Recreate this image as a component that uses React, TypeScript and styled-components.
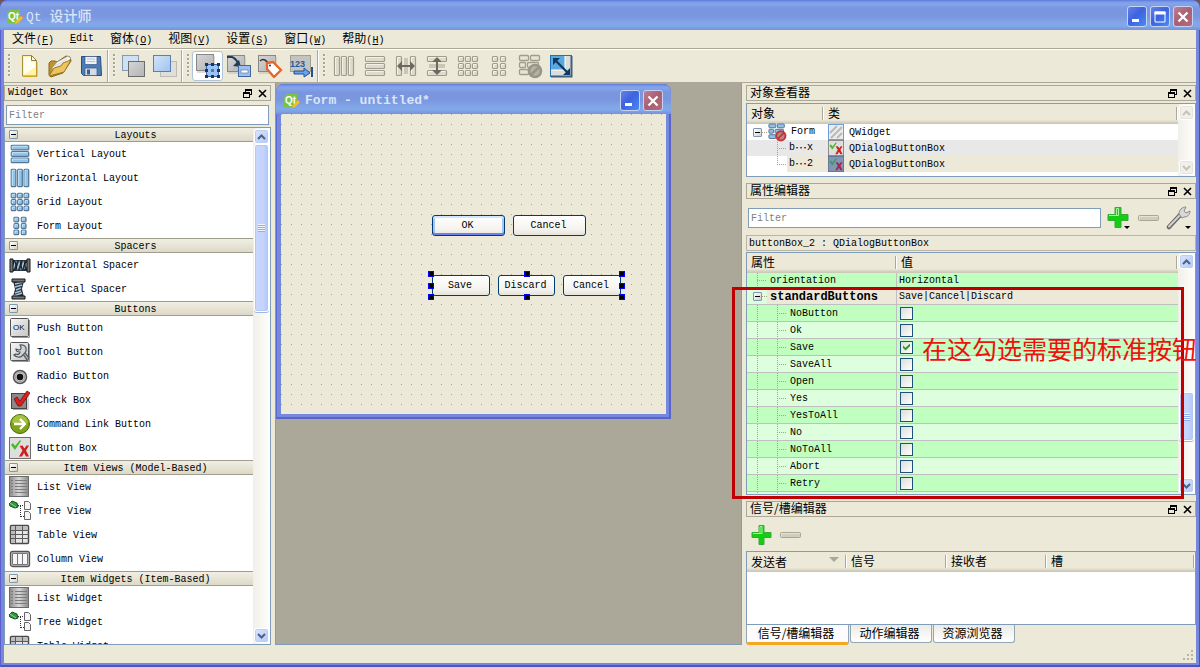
import React from "react";
import styled, { createGlobalStyle, css } from "styled-components";

const face = "#ece9d8";
const shade = "#aca899";
const field = "#7f9db9";

const GlobalStyle = createGlobalStyle`
  * { box-sizing: border-box; }
  body {
    margin: 0;
    background: #6f5560;
    color: #000;
    font: 10px/16px "Liberation Mono", "Noto Sans CJK SC", monospace;
  }
  button, input { font: inherit; color: inherit; padding: 0; border: 0; margin: 0; border-radius: 0; }
  button { background: none; }
  table { border-collapse: separate; border-spacing: 0; table-layout: fixed; width: 100%; }
  th, td { padding: 0; font-weight: normal; text-align: left; }
  svg { display: block; flex: none; }
`;

const Zh = styled.span`
  font-family: "Noto Sans CJK SC", sans-serif;
  font-size: 12px;
`;

/* ---------- window frames ---------- */

const Window = styled.div`
  height: 100vh;
  min-height: 560px;
  display: flex;
  flex-direction: column;
  padding: 0 4px 4px;
  overflow: hidden;
  border-radius: 8px 8px 0 0;
  background: #7488de;
  box-shadow: inset 1px 0 #5a5fcb, inset -1px 0 #4c4fb4, inset 0 -2px #5053bd;
`;

const TitleBar = styled.header<{ $inner?: boolean }>`
  flex: none;
  height: 30px;
  margin: 0 ${(p) => (p.$inner ? "-5px" : "-4px")};
  padding: ${(p) => (p.$inner ? "3px 8px 0 8px" : "3px 7px 0 7px")};
  display: flex;
  align-items: center;
  gap: 3px;
  border-radius: 8px 8px 0 0;
  background: linear-gradient(#5b79dd 0, #7d9ce8 2px, #86a4ea 4px, #7b96e0 8px, #7a96df 16px, #82a7e8 23px, #82a8e9 26px, #7690dd 30px);
`;

const TitleText = styled.h1<{ $bold?: boolean }>`
  flex: 1;
  margin: 0;
  padding-left: ${(p) => (p.$bold ? 2 : 0)}px;
  color: #d9e5f9;
  font-size: 13px;
  font-weight: ${(p) => (p.$bold ? "bold" : "normal")};
  line-height: 20px;
  white-space: pre;
  span { font-size: 14px; font-weight: 500; }
`;

const CaptionButton = styled.button<{ $close?: boolean }>`
  width: 20px;
  height: 21px;
  display: grid;
  place-items: center;
  border: 1px solid #c5d3f5;
  border-radius: 3px;
  background: ${(p) =>
    p.$close ? "linear-gradient(135deg, #bd7f96, #a95f70 50%, #b16c7e)" : "linear-gradient(135deg, #6583e4, #3d62e0 45%, #4a8af0)"};
`;

/* ---------- menu and tool bars ---------- */

const MenuBar = styled.nav`
  flex: none;
  height: 19px;
  display: flex;
  align-items: center;
  gap: 16px;
  padding-left: 8px;
  background: ${face};
  border-bottom: 1px solid ${shade};
`;

const MenuItem = styled.button`
  white-space: nowrap;
  line-height: 16px;
`;

const ToolBar = styled.div`
  flex: none;
  height: 34px;
  display: flex;
  background: ${face};
  border-top: 1px solid #fff;
  border-bottom: 1px solid ${shade};
`;

const ToolGroup = styled.div`
  display: flex;
  align-items: center;
  padding: 0 1px 0 4px;
  border-right: 1px solid ${shade};
  box-shadow: 1px 0 #fff;
  margin-right: 1px;
  &:last-child { border: 0; box-shadow: none; }
`;

const Grip = styled.i`
  width: 3px;
  height: 24px;
  margin-right: 2px;
  background: radial-gradient(circle at 1px 1px, #a8a494 1px, #fff 1px, transparent 2px) 0 0 / 3px 4px;
`;

const ToolButton = styled.button<{ $on?: boolean }>`
  width: 31px;
  height: 30px;
  display: grid;
  place-items: center;
  border: 1px solid transparent;
  border-radius: 3px;
  ${(p) => p.$on && css`background: #fff; border-color: #b0c4d8;`}
`;

/* ---------- main areas ---------- */

const Main = styled.main`
  flex: 1;
  min-height: 0;
  display: flex;
  background: ${face};
`;

const LeftDock = styled.aside`
  flex: none;
  width: 267px;
  display: flex;
  flex-direction: column;
  padding-top: 2px;
`;

const MdiArea = styled.section`
  flex: 1;
  min-width: 0;
  margin: 0 4px;
  border: 1px solid ${field};
  border-top: 0;
  background: ${shade};
  overflow: hidden;
`;

const RightDock = styled.aside`
  flex: none;
  width: 450px;
  display: flex;
  flex-direction: column;
  padding-top: 2px;
`;

const StatusBar = styled.footer`
  flex: none;
  height: 18px;
  display: flex;
  justify-content: flex-end;
  align-items: flex-end;
  padding: 0 1px 1px;
  background: ${face};
`;

const DockHeader = styled.div`
  flex: none;
  height: 16px;
  display: flex;
  align-items: center;
  gap: 6px;
  padding: 0 3px;
  border: 1px solid ${shade};
`;

const DockName = styled.h2`
  flex: 1;
  margin: 0;
  font-size: 10px;
  font-weight: normal;
  line-height: 14px;
`;

const DockButton = styled.button`
  width: 9px;
  height: 10px;
`;

const FilterInput = styled.input`
  flex: 1;
  min-width: 0;
  height: 20px;
  padding: 0 2px;
  border: 1px solid ${field};
  background: #fff;
  outline: 0;
  &::placeholder { color: #808080; opacity: 1; }
`;

const FilterRow = styled.div<{ $tall?: boolean }>`
  flex: none;
  display: flex;
  align-items: center;
  gap: 6px;
  padding: ${(p) => (p.$tall ? "7px 4px 5px 2px" : "4px 2px 2px")};
`;

const Pane = styled.div<{ $h?: number; $gap?: number }>`
  ${(p) => (p.$h ? `flex: none; height: ${p.$h}px;` : "flex: 1; min-height: 0;")}
  margin-top: ${(p) => p.$gap ?? 0}px;
  margin-bottom: ${(p) => (p.$gap ? 6 : 0)}px;
  display: flex;
  border: 1px solid ${field};
  background: #fff;
`;

const PaneBody = styled.div`
  flex: 1;
  min-width: 0;
  overflow: hidden;
`;

/* ---------- scroll bar ---------- */

const Bar = styled.div`
  flex: none;
  width: 17px;
  display: flex;
  flex-direction: column;
  padding: 1px;
  background: linear-gradient(90deg, #f1efe9, #fefefb);
`;

const BarButton = styled.button<{ $off?: boolean }>`
  flex: none;
  height: 15px;
  display: grid;
  place-items: center;
  border: 1px solid #fff;
  border-radius: 3px;
  color: ${(p) => (p.$off ? "#c5c3b8" : "#4d6185")};
  background: ${(p) => (p.$off ? "#f1f0ea" : "linear-gradient(135deg, #dbe6fd, #b5c9f8)")};
  box-shadow: ${(p) => (p.$off ? "inset 0 0 0 1px #e5e3da" : "inset 0 0 0 1px #bccdf3")};
`;

const BarSpace = styled.div<{ $grow: number }>`
  flex: ${(p) => p.$grow} 1 0;
`;

const BarThumb = styled.div<{ $grow: number }>`
  flex: ${(p) => p.$grow} 1 0;
  display: grid;
  place-items: center;
  border: 1px solid #fff;
  border-radius: 3px;
  background: linear-gradient(90deg, #c6d6fd, #c4d4fd 60%, #b2c7f8);
  box-shadow: inset 0 0 0 1px #b4c8f6, 0 1px #9db5e4;
  &::after {
    content: "";
    width: 7px;
    height: 8px;
    background: repeating-linear-gradient(#eef4fe 0 1px, #8cb0f8 1px 2px);
  }
`;

function ScrollBar({ parts, off }: { parts?: number[]; off?: boolean }) {
  return (
    <Bar>
      <BarButton $off={off} aria-label="Scroll up">
        <svg width="9" height="6" viewBox="0 0 9 6"><path d="M1 5l3.5-3.5L8 5" fill="none" stroke="currentColor" strokeWidth="2" /></svg>
      </BarButton>
      {parts ? (
        <>
          <BarSpace $grow={parts[0]} />
          <BarThumb $grow={parts[1]} />
          <BarSpace $grow={parts[2]} />
        </>
      ) : (
        <BarSpace $grow={1} />
      )}
      <BarButton $off={off} aria-label="Scroll down">
        <svg width="9" height="6" viewBox="0 0 9 6"><path d="M1 1l3.5 3.5L8 1" fill="none" stroke="currentColor" strokeWidth="2" /></svg>
      </BarButton>
    </Bar>
  );
}

/* ---------- widget box ---------- */

const Category = styled.button`
  width: 100%;
  height: 15px;
  display: flex;
  align-items: center;
  padding-left: 4px;
  border-top: 1px solid #a19d8d;
  border-bottom: 1px solid #a19d8d;
  background: linear-gradient(#f1efe3, #ddd9c8);
  line-height: 13px;
  &:first-child { border-top: 0; height: 14px; }
  b { flex: 1; padding-top: 1px; font-weight: normal; text-align: center; }
`;

const Toggle = styled.i`
  flex: none;
  width: 9px;
  height: 9px;
  border: 1px solid #7b98b5;
  border-radius: 1px;
  background: linear-gradient(#000, #000) 1px 3px / 5px 1px no-repeat, linear-gradient(135deg, #fff, #d5d0c2);
`;

const WidgetList = styled.ul`
  margin: 0;
  padding: 0;
  list-style: none;
`;

const WidgetItem = styled.li`
  height: 24px;
  display: flex;
  align-items: center;
  gap: 6px;
  padding-left: 4px;
  span { padding-top: 2px; }
`;

/* ---------- tables ---------- */

const HeadCell = styled.th<{ $w?: number }>`
  ${(p) => p.$w && `width: ${p.$w}px;`}
  height: 20px;
  padding-left: 4px;
  line-height: 16px;
  background:
    linear-gradient(${shade}, ${shade}) right 1px top 3px / 1px 13px no-repeat,
    linear-gradient(#fff, #fff) right 0 top 3px / 1px 13px no-repeat,
    linear-gradient(${face} 16px, #d8d4c4 18px, #c9c5b4 20px);
`;

const HeadFlex = styled.div`
  display: flex;
  justify-content: space-between;
  padding-right: 8px;
`;

const dotsDown = "repeating-linear-gradient(#a5a294 0 1px, transparent 1px 2px)";
const dotsRight = "repeating-linear-gradient(90deg, #a5a294 0 1px, transparent 1px 2px)";

const Guide = styled.i<{ $branch?: boolean; $end?: boolean }>`
  flex: none;
  align-self: stretch;
  width: 20px;
  background:
    ${(p) => (p.$branch ? `${dotsRight} 10px 50% / 9px 1px no-repeat,` : "")}
    ${dotsDown} 10px 0 / 1px ${(p) => (p.$end ? "50%" : "100%")} no-repeat;
`;

const Indent = styled.i`
  flex: none;
  width: 20px;
`;

const ToggleGuide = styled.span<{ $bg?: string }>`
  flex: none;
  align-self: stretch;
  width: 20px;
  display: flex;
  align-items: center;
  padding-left: 6px;
  background: ${dotsRight} 15px 50% / 5px 1px no-repeat${(p) => (p.$bg ? `, ${p.$bg}` : "")};
`;

const TreeRow = styled.tr<{ $bg?: string }>`
  height: 16px;
  td { background: ${(p) => p.$bg ?? "#fff"}; }
`;

const Cell = styled.div<{ $gap?: number; $pad?: number }>`
  height: 16px;
  display: flex;
  align-items: center;
  gap: ${(p) => p.$gap ?? 0}px;
  padding-left: ${(p) => p.$pad ?? 0}px;
  white-space: nowrap;
`;

const Blank = styled.i`
  align-self: stretch;
  width: 40px;
  display: flex;
  background: #fff;
`;

const PropRow = styled.tr<{ $bg: string; $tall?: boolean }>`
  td {
    height: ${(p) => (p.$tall ? 17 : 16)}px;
    background: ${(p) => p.$bg};
    border-bottom: 1px solid #bfbfbf;
  }
  td:first-child { border-right: 1px solid #bfbfbf; }
  td > div { height: ${(p) => (p.$tall ? 16 : 15)}px; }
`;

const PropName = styled.label<{ $bold?: boolean }>`
  padding: 1px 0 0 3px;
  ${(p) => p.$bold && "font-weight: bold; font-size: 12px;"}
`;

const PropValue = styled.span`
  padding-top: 1px;
`;

const Check = styled.input`
  appearance: none;
  width: 13px;
  height: 13px;
  display: grid;
  place-items: center;
  border: 1px solid #1c5180;
  background: linear-gradient(135deg, #dcdcd7, #fff);
  &:checked::after {
    content: "";
    width: 7px;
    height: 7px;
    background: #21a121;
    clip-path: polygon(0 28%, 36% 62%, 100% 0, 100% 40%, 36% 100%, 0 66%);
  }
`;

const ObjectLabel = styled.div`
  flex: none;
  height: 16px;
  margin-bottom: 1px;
  padding-left: 2px;
  border: 1px solid #b9b5a5;
  line-height: 15px;
`;

const PropArea = styled.div`
  position: relative;
  flex: 1;
  min-height: 0;
  display: flex;
  margin-bottom: 6px;
`;

const Highlight = styled.div`
  position: absolute;
  z-index: 2;
  left: -14px;
  right: 12px;
  top: 35px;
  bottom: -4px;
  border: 3px solid #c00000;
  pointer-events: none;
`;

const Note = styled.p`
  position: absolute;
  z-index: 3;
  left: 176px;
  top: 80px;
  margin: 0;
  color: #f01010;
  font: 25px/32px "Noto Sans CJK SC", sans-serif;
  white-space: nowrap;
`;

const IconButton = styled.button`
  display: block;
`;

const SlotTools = styled.div`
  flex: none;
  height: 34px;
  display: flex;
  align-items: center;
  gap: 8px;
  padding: 2px 0 0 5px;
`;

const Tabs = styled.div`
  flex: none;
  height: 20px;
  display: flex;
  align-items: flex-start;
  gap: 1px;
`;

const Tab = styled.button<{ $on?: boolean }>`
  width: ${(p) => (p.$on ? 103 : 82)}px;
  height: ${(p) => (p.$on ? 20 : 18)}px;
  padding-right: 3px;
  border: 1px solid #91a7b4;
  border-top: 0;
  border-radius: 0 0 3px 3px;
  background: linear-gradient(#ecebe6, #fff);
  line-height: 16px;
  ${(p) => p.$on && css`
    background: #fcfcfe;
    border-bottom: 3px solid #f5a623;
  `}
`;

/* ---------- form being designed ---------- */

const FormWindow = styled.div`
  width: 395px;
  margin-top: 1px;
  max-width: 100%;
  padding: 0 5px 5px;
  border-radius: 8px 8px 0 0;
  background: #7488de;
  box-shadow: inset 1px 0 #5a6bd2, inset -2px 0 #5a62cb, inset 0 -2px #5a62cb;
`;

const Canvas = styled.div`
  position: relative;
  height: 300px;
  background: conic-gradient(from 0deg at 1px 1px, ${face} 75%, #a8a596 0) 0 0 / 10px 10px;
`;

const ButtonBox = styled.div<{ $y: number }>`
  position: absolute;
  left: 151px;
  top: ${(p) => p.$y}px;
  display: flex;
  gap: 8px;
`;

const PushButton = styled.button<{ $w: number; $default?: boolean }>`
  width: ${(p) => p.$w}px;
  height: 21px;
  padding: 1px 2px 0 0;
  border: 1px solid #003c74;
  border-radius: 3px;
  background: linear-gradient(#fff, #f4f3ee 70%, #e6e3da);
  ${(p) => p.$default && css`box-shadow: inset 0 2px #cee7ff, inset 0 -2px #6982ee, inset 2px 0 #a9c3f2, inset -2px 0 #a9c3f2;`}
`;

const Handle = styled.i<{ $x: string; $y: string }>`
  position: absolute;
  width: 6px;
  height: 6px;
  left: ${(p) => p.$x};
  top: ${(p) => p.$y};
  border: 1px solid #00f;
  background: #000;
`;

/* ---------- drawings ---------- */

const QtLogo = () => (
  <svg width="16" height="16" viewBox="0 0 16 16">
    <path d="M3 1h10v10l-3 3H0V4z" fill="#7cc242" />
    <text x="1" y="11" fontFamily="Liberation Sans" fontWeight="bold" fontSize="10" fill="#fff">Qt</text>
    <path d="M8 15l1-3 5-5 2 2-5 5z" fill="#f4c020" />
    <path d="M14 7l1-1 1.500 1.500L16 9z" fill="#e08080" />
  </svg>
);

const Minimize = () => (
  <svg width="14" height="14"><rect x="2" y="9" width="7" height="3" fill="#fff" /></svg>
);
const Maximize = () => (
  <svg width="14" height="14"><path d="M2 2h10v10H2z" fill="none" stroke="#fff" /><path d="M1.500 1.500h11v3h-11z" fill="#fff" /></svg>
);
const Close = () => (
  <svg width="14" height="14"><path d="M2.500 2.500l9 9M11.500 2.500l-9 9" stroke="#fff" strokeWidth="2.300" /></svg>
);
const Float = () => (
  <svg width="9" height="9" shapeRendering="crispEdges">
    <path d="M2 0h7v2H2zM8 0h1v6H8zM6 5h3v1H6zM2 0h1v3H2z" />
    <path d="M0 3h7v2H0zM0 3h1v6H0zM6 3h1v6H6zM0 8h7v1H0z" />
  </svg>
);
const Cross = () => (
  <svg width="9" height="9"><path d="M1 1l7 7M8 1L1 8" stroke="#000" strokeWidth="1.600" /></svg>
);

const NewFile = () => (
  <svg width="24" height="24" viewBox="0 0 24 24">
    <path d="M5.500 1.500h9l5 5V22h-14z" fill="#fff3a4" stroke="#a98e3c" />
    <path d="M7 3h7v5h4v5L9 20H7z" fill="#fffef2" />
    <path d="M14.500 1.500v5h5z" fill="#fffbe0" stroke="#8f7c3c" />
    <path d="M6 22.500h14V8" fill="none" stroke="#cfa52a" />
  </svg>
);
const OpenFile = () => (
  <svg width="26" height="24" viewBox="0 0 26 24">
    <path d="M2 21V9l2-2h4l2 1 9-6 4 1 1 4-8 12-12 4z" fill="#c3922a" stroke="#8a6718" />
    <path d="M5 14l5-6 11-6 3 2-6 8-12 5z" fill="#f6f6f2" stroke="#8e8e88" strokeWidth=".7" />
    <path d="M8 12l12-7M8 14l12-7" stroke="#c9c9c4" strokeWidth=".7" />
    <path d="M2 22l5-8 7-2 2-3 8-3-7 12z" fill="#ecc460" stroke="#a07a1c" />
  </svg>
);
const Save = () => (
  <svg width="24" height="24" viewBox="0 0 24 24">
    <path d="M2.500 2.500h19l1 19h-18l-2-2z" fill="#4b7db8" stroke="#2b4c78" />
    <path d="M6 2.500h12v8H6z" fill="#eef2f7" stroke="#35588a" strokeWidth=".7" />
    <path d="M8 5h8M8 7.500h8" stroke="#b3c2d4" />
    <path d="M6 14h12v7.500H6z" fill="#d4dbe4" stroke="#35588a" strokeWidth=".7" />
    <path d="M8 15.500h3v5H8z" fill="#385f90" />
  </svg>
);
const Layers = ({ raise }: { raise?: boolean }) => (
  <svg width="26" height="24" viewBox="0 0 26 24">
    <defs>
      <linearGradient id="lb" x2="1" y2="1"><stop stopColor="#d3e5fb" /><stop offset="1" stopColor="#9fc2ef" /></linearGradient>
      <linearGradient id="lg" x2="1" y2="1"><stop stopColor="#d6d6d6" /><stop offset="1" stopColor="#b3b3b3" /></linearGradient>
    </defs>
    {raise ? (
      <>
        <rect x="8.500" y="7.500" width="16" height="15" fill="#dededa" stroke="#bcbcb4" />
        <rect x="1.500" y="1.500" width="17" height="16" fill="url(#lb)" stroke="#5a7fb0" />
      </>
    ) : (
      <>
        <rect x="1.500" y="1.500" width="16" height="15" fill="#cfe0f2" stroke="#8299b5" />
        <rect x="7.500" y="7.500" width="16" height="15" fill="url(#lg)" stroke="#6c6c6c" />
      </>
    )}
  </svg>
);
const GreyBack = () => (
  <>
    <rect x="1.500" y="1.500" width="17" height="16" fill="url(#lg)" stroke="#878787" />
    <path d="M2 19h17V3" fill="none" stroke="#bdbaa9" />
  </>
);
const EditWidgets = () => (
  <svg width="26" height="26" viewBox="0 0 26 26">
    <GreyBack />
    <rect x="11.500" y="11.500" width="12" height="12" fill="#9cc3f8" stroke="#3c64a0" />
    {[10, 16, 22].map((x) => [10, 16, 22].map((y) => (x === 16 && y === 16 ? null : <rect key={`${x}${y}`} x={x} y={y} width="3" height="3" fill="#1f3454" />)))}
    <rect x="16" y="16" width="3" height="3" fill="#5478b0" />
  </svg>
);
const EditSignals = () => (
  <svg width="26" height="24" viewBox="0 0 26 24">
    <GreyBack />
    <path d="M1 3h5c3 1 5 4 6 6" fill="none" stroke="#263c55" strokeWidth="2" />
    <path d="M15 13l-8-1 6-6z" fill="#263c55" />
    <rect x="12.500" y="11.500" width="12" height="11" fill="#9ebfee" stroke="#4068a0" />
    <rect x="15" y="16" width="7" height="3" fill="#fff" stroke="#4a70b0" strokeWidth=".6" />
  </svg>
);
const EditBuddies = () => (
  <svg width="26" height="24" viewBox="0 0 26 24">
    <GreyBack />
    <path d="M3 7c3-3 7-1 9 4" fill="none" stroke="#333" strokeWidth="1.500" />
    <path d="M10 9l6-1 8 8-7 7-7-8z" fill="#fff" stroke="#e5662a" strokeWidth="2.300" />
    <circle cx="13" cy="11.500" r="1" fill="#333" />
  </svg>
);
const TabOrder = () => (
  <svg width="26" height="24" viewBox="0 0 26 24">
    <rect x="2.500" y="1.500" width="20" height="16" fill="#c3c3bf" stroke="#a1a19b" />
    <text x="2" y="13" fontFamily="Liberation Sans" fontSize="9" fontWeight="bold" fill="#28589e">123</text>
    <path d="M6 17h10v-3l6 5-6 4v-3H6z" fill="#66a3ee" stroke="#24518e" />
    <path d="M24 13v10" stroke="#24518e" strokeWidth="2" />
  </svg>
);

type Bars = { boxes: number[][]; blue?: boolean; children?: React.ReactNode };
const BarsIcon = ({ boxes, blue, children }: Bars) => (
  <svg width={22} height={22} viewBox={blue ? "-1 -1 24 24" : "0 0 22 22"}>
    {boxes.map(([x, y, w, h]) => (
      <g key={`${x}-${y}`}>
        <rect x={x + 0.5} y={y + 0.5} width={w - 1} height={h - 1} rx="1" fill={blue ? "#8fc4ea" : "#dedbcc"} stroke={blue ? "#567797" : "#a09d8c"} strokeWidth={blue ? 1.4 : 1.2} />
        <path d={`M${x + 1.5} ${y + h - 1.5}V${y + 1.5}H${x + w - 1.5}`} fill="none" stroke={blue ? "#cdeafa" : "#f4f2e8"} />
      </g>
    ))}
    {children}
  </svg>
);
const columns = [[1, 1, 6, 20], [8, 1, 6, 20], [15, 1, 6, 20]];
const lines = [[1, 1, 20, 6], [1, 8, 20, 6], [1, 15, 20, 6]];
const grid = [1, 8, 15].flatMap((y) => [1, 8, 15].map((x) => [x, y, 6, 6]));
const formGrid = [1, 8, 15].flatMap((y) => [4, 12].map((x) => [x, y, 6, 6]));
const SplitH = () => (
  <BarsIcon boxes={[[1, 1, 6, 20], [15, 1, 6, 20]]}>
    <path d="M10 3v16M12 3v16" stroke="#a7a493" />
    <path d="M2 11l5-5v4h8V6l5 5-5 5v-4H7v4z" fill="#6c6a60" />
  </BarsIcon>
);
const SplitV = () => (
  <BarsIcon boxes={[[1, 1, 20, 6], [1, 15, 20, 6]]}>
    <path d="M3 10h16M3 12h16" stroke="#a7a493" />
    <path d="M11 2l5 5h-4v8h4l-5 5-5-5h4V7H6z" fill="#6c6a60" />
  </BarsIcon>
);
const BreakLayout = ({ color, size = 26 }: { color?: boolean; size?: number }) => (
  <svg width={size} height={size} viewBox="0 0 26 26">
    {[[2, 2, 10, 6], [13, 2, 10, 6], [2, 9, 7, 6], [10, 9, 12, 6], [2, 16, 10, 6]].map(([x, y, w, h]) => (
      <rect key={`${x}-${y}`} x={x + 0.5} y={y + 0.5} width={w - 1} height={h - 1} rx="1" fill={color ? "#93bfe3" : "#e8e5d8"} stroke={color ? "#55789c" : "#a09d8c"} strokeWidth="1.300" />
    ))}
    <circle cx="18" cy="18" r="6" fill={color ? "#b58a8a" : "#b5b2a4"} stroke={color ? "#c03838" : "#98968a"} strokeWidth="2.600" />
    <path d="M14 22l8-8" stroke={color ? "#c03838" : "#98968a"} strokeWidth="2.500" />
  </svg>
);
const AdjustSize = () => (
  <svg width="24" height="24" viewBox="0 0 24 24">
    <rect x="1.500" y="1.500" width="21" height="21" fill="#dcdcd8" stroke="#2370b8" />
    <path d="M2 2h14v14H2z" fill="#5ca8dc" />
    <path d="M2 16h14M16 2v14" stroke="#fff" />
    <path d="M22.500 2v20.500H2" fill="none" stroke="#3e5f80" strokeWidth="2" />
    <path d="M7 7l11 11" stroke="#0d3b66" strokeWidth="2.300" />
    <path d="M4 4h7l-7 7zM21 21h-7l7-7z" fill="#0d3b66" />
  </svg>
);

const HSpacer = () => (
  <svg width="22" height="22" viewBox="0 0 22 22">
    <path d="M3 6h16v11H3z" fill="#25323c" />
    <path d="M4 15l3-8M8 16l3-9M12 16l3-9M16 15l2-6" stroke="#a6c4d8" strokeWidth="1.700" />
    <path d="M6 7l2 9M11 7l2 9M15 7l2 9" stroke="#10181e" />
    <path d="M1 5h3v13H1zM18 5h3v13h-3z" fill="#777" stroke="#151515" />
  </svg>
);
const VSpacer = () => (
  <svg width="22" height="22" viewBox="0 0 22 22">
    <path d="M4 3h11l-2 8 2 8H4l2-8z" fill="#25323c" />
    <path d="M6 6l8-2M6 9l7-2M7 12l5-2M6 15l6-2M5 18l8-3" stroke="#a6c4d8" strokeWidth="1.500" />
    <path d="M3 1h13v3H3zM3 18h13v3H3z" fill="#777" stroke="#151515" />
  </svg>
);
const GreyButton = ({ children }: { children?: React.ReactNode }) => (
  <svg width="22" height="22" viewBox="0 0 22 22">
    <defs><linearGradient id="gb" x2="1" y2="1"><stop stopColor="#f7f7f7" /><stop offset="1" stopColor="#c4c4c4" /></linearGradient></defs>
    <path d="M3 20.500h17.500V3" fill="none" stroke="#9a9a9a" />
    <rect x="1.500" y="1.500" width="18" height="18" rx="1" fill="url(#gb)" stroke="#555" />
    {children}
  </svg>
);
const PushIcon = () => (
  <GreyButton><text x="4" y="13" fontFamily="Liberation Sans" fontSize="8" fill="#111">OK</text></GreyButton>
);
const ToolIcon = () => (
  <GreyButton>
    <path d="M11 4c4-1 7 2 6 6-1 3-3 3-4 5-2 2-6 1-8-1l2-1c2 1 4 0 4-2-3 0-4-1-4-3l3 1c2 0 3-2 1-5z" fill="#cfd3d8" stroke="#4c535c" strokeWidth="1.200" />
    <path d="M14 13l5 7M16 12l4 5" stroke="#5c636c" strokeWidth="1.500" />
  </GreyButton>
);
const RadioIcon = () => (
  <svg width="22" height="22" viewBox="0 0 22 22">
    <circle cx="11" cy="12" r="6.500" fill="#d2d2d2" stroke="#555" strokeWidth="1.500" />
    <circle cx="11" cy="12" r="4.700" fill="none" stroke="#9a9a9a" />
    <circle cx="11" cy="12" r="3.300" fill="#111" />
  </svg>
);
const CheckIcon = () => (
  <svg width="22" height="22" viewBox="0 0 22 22">
    <rect x="2.500" y="4.500" width="15" height="15" fill="#8a8a8a" stroke="#444" />
    <path d="M4 20.500h15V7" fill="none" stroke="#aaa" />
    <path d="M5 10l3-2 3 4 7-10 3 2-9 13H9z" fill="#da1f1f" stroke="#7e0c0c" strokeWidth=".8" />
  </svg>
);
const CommandIcon = () => (
  <svg width="22" height="22" viewBox="0 0 22 22">
    <circle cx="11" cy="11" r="9.500" fill="#7fa31a" stroke="#4c650c" />
    <path d="M3 10a8 8 0 0 1 16 0z" fill="#a5c23c" />
    <path d="M5 11h10M11 6l5 5-5 5" fill="none" stroke="#fff" strokeWidth="2.300" />
  </svg>
);
const BoxIcon = ({ size = 22, picked }: { size?: number; picked?: boolean }) => (
  <svg width={size} height={size} viewBox="0 0 22 22">
    <rect x=".5" y=".5" width="21" height="21" fill={picked ? "#8095b8" : "#dedede"} stroke={picked ? "#4d6488" : "#6e6e6e"} />
    <path d="M2 8l2-2 2 3 5-6 1 1-6 9z" fill={picked ? "#3d9a5a" : "#4ab82a"} />
    <path d="M10.500 9l3-.5 2 3 2-3h2.500l-3 5 3 6h-3l-2-3.500-2 3.500h-3l3.500-6z" fill={picked ? "#a0284c" : "#cf1f1f"} />
  </svg>
);
const ListIcon = () => (
  <svg width="22" height="22" viewBox="0 0 22 22">
    <defs><linearGradient id="ls" x2="1" y2="0"><stop stopColor="#8a8a8a" /><stop offset=".5" stopColor="#d8d8d8" /><stop offset="1" stopColor="#8a8a8a" /></linearGradient></defs>
    <rect x=".5" y=".5" width="19" height="20" fill="url(#ls)" stroke="#6a6a6a" />
    <path d="M2 4.500h2M2 7.500h2M2 10.500h2M2 13.500h2M2 16.500h2M6 4.500h12M6 7.500h12M6 10.500h12M6 13.500h12M6 16.500h12" stroke="#7c7c7c" />
  </svg>
);
const TreeIcon = () => (
  <svg width="22" height="22" viewBox="0 0 22 22">
    <path d="M0 4l3-3 5 2 1 4-3 1-5-2z" fill="#2f9a3c" stroke="#155020" />
    <path d="M1 3l6 4" stroke="#8fd897" />
    <path d="M9 5.500h5M11.500 6v11M12 16.500h3" fill="none" stroke="#333" strokeDasharray="1 1" />
    <path d="M15.500 1.500h4l2 2v6h-6zM15.500 11.500h4l2 2v6h-6z" fill="#f4f4f4" stroke="#666" />
  </svg>
);
const TableIcon = () => (
  <svg width="22" height="22" viewBox="0 0 22 22">
    <rect x="1.500" y="1.500" width="18" height="18" rx="1" fill="#e6e6e6" stroke="#4a4a4a" strokeWidth="1.500" />
    <path d="M2 3h17v3H2zM2 3h4v16H2z" fill="#bdbdbd" />
    <path d="M2 6.500h18M2 10.500h18M2 14.500h18M6.500 2v17M13.500 2v17" stroke="#5b5b5b" />
  </svg>
);
const ColumnIcon = () => (
  <svg width="22" height="22" viewBox="0 0 22 22">
    <rect x="1.500" y="3.500" width="19" height="15" rx="2" fill="#c4c4c4" stroke="#555" strokeWidth="1.300" />
    <path d="M3.500 5.500h15v11h-15z" fill="#f6f6f6" stroke="#777" />
    <path d="M8.500 6v10M13.500 6v10" stroke="#777" />
  </svg>
);
const WidgetIcon = () => (
  <svg width="16" height="16" viewBox="0 0 16 16">
    <rect x=".5" y=".5" width="15" height="15" fill="#ececec" stroke="#6f9fd8" />
    <path d="M2 9l7-7M3 14L14 3M9 14l5-5" stroke="#b9b9b9" strokeWidth="2" />
  </svg>
);
const PlusIcon = ({ menu }: { menu?: boolean }) => (
  <svg width={menu ? 25 : 21} height="24" viewBox={menu ? "2 0 25 24" : "0 0 21 24"}>
    <path d={menu ? "M10 1.500h6v7h7v6h-7v7h-6v-7H3v-6h7z" : "M8 2.500h5v7h7v5h-7v7H8v-7H1v-5h7z"} fill="#12cf12" stroke="#38a838" />
    <path d={menu ? "M11.500 9.500v-7h2v7H4" : "M9 10.500V3.500h2v7H2"} fill="none" stroke="#a8f5a0" />
    {menu && <path d="M19 20h6l-3 3z" />}
  </svg>
);
const MinusIcon = () => (
  <svg width="22" height="8" viewBox="0 0 22 8"><rect x=".5" y="1.500" width="20" height="5" rx="1" fill="#d0cdbf" stroke="#a9a698" /><path d="M1.500 5.500v-3h18" fill="none" stroke="#e5e3d9" /></svg>
);
const WrenchIcon = () => (
  <svg width="26" height="24" viewBox="0 0 26 24">
    <path d="M3 21L15 8" stroke="#666" strokeWidth="4.500" strokeLinecap="round" />
    <path d="M3 20.500L15 8" stroke="#d2d2d2" strokeWidth="2" strokeLinecap="round" />
    <path d="M13 8c0-4 3-7 7-7l-2 4 2 2 4-2c0 4-3 6-6 6l-2 1z" fill="#d8d8d8" stroke="#8a8a8a" />
    <path d="M19 20h6l-3 3z" />
  </svg>
);
const SizeGrip = () => (
  <svg width="12" height="12">
    {[[8, 0], [4, 4], [8, 4], [0, 8], [4, 8], [8, 8]].map(([x, y]) => (
      <rect key={`${x}-${y}`} x={x} y={y} width="2" height="2" fill="#b8b4a3" />
    ))}
  </svg>
);

/* ---------- data ---------- */

const menus: [string, string][] = [["文件", "F"], ["", ""], ["窗体", "O"], ["视图", "V"], ["设置", "S"], ["窗口", "W"], ["帮助", "H"]];

const categories: { name: string; items: [string, React.ReactNode][] }[] = [
  { name: "Layouts", items: [
    ["Vertical Layout", <BarsIcon boxes={lines} blue />],
    ["Horizontal Layout", <BarsIcon boxes={columns} blue />],
    ["Grid Layout", <BarsIcon boxes={grid} blue />],
    ["Form Layout", <BarsIcon boxes={formGrid} blue />],
  ] },
  { name: "Spacers", items: [["Horizontal Spacer", <HSpacer />], ["Vertical Spacer", <VSpacer />]] },
  { name: "Buttons", items: [
    ["Push Button", <PushIcon />],
    ["Tool Button", <ToolIcon />],
    ["Radio Button", <RadioIcon />],
    ["Check Box", <CheckIcon />],
    ["Command Link Button", <CommandIcon />],
    ["Button Box", <BoxIcon />],
  ] },
  { name: "Item Views (Model-Based)", items: [
    ["List View", <ListIcon />],
    ["Tree View", <TreeIcon />],
    ["Table View", <TableIcon />],
    ["Column View", <ColumnIcon />],
  ] },
  { name: "Item Widgets (Item-Based)", items: [
    ["List Widget", <ListIcon />],
    ["Tree Widget", <TreeIcon />],
    ["Table Widget", <TableIcon />],
  ] },
];

const toolGroups: [string, React.ReactNode][][] = [
  [["New", <NewFile />], ["Open", <OpenFile />], ["Save", <Save />]],
  [["Send to back", <Layers />], ["Bring to front", <Layers raise />]],
  [["Edit widgets", <EditWidgets />], ["Edit signals", <EditSignals />], ["Edit buddies", <EditBuddies />], ["Edit tab order", <TabOrder />]],
  [
    ["Lay out horizontally", <BarsIcon boxes={columns} />],
    ["Lay out vertically", <BarsIcon boxes={lines} />],
    ["Horizontal splitter", <SplitH />],
    ["Vertical splitter", <SplitV />],
    ["Grid", <BarsIcon boxes={grid} />],
    ["Form layout", <BarsIcon boxes={formGrid} />],
    ["Break layout", <BreakLayout />],
    ["Adjust size", <AdjustSize />],
  ],
];

const flags = ["NoButton", "Ok", "Save", "SaveAll", "Open", "Yes", "YesToAll", "No", "NoToAll", "Abort", "Retry"];
const green = "#c0ffc0";
const pale = "#ddffdd";

function DockTitle({ children }: { children: React.ReactNode }) {
  return (
    <DockHeader>
      <DockName>{children}</DockName>
      <DockButton aria-label="Float"><Float /></DockButton>
      <DockButton aria-label="Close"><Cross /></DockButton>
    </DockHeader>
  );
}

export default function App() {
  return (
    <Window>
      <GlobalStyle />
      <TitleBar>
        <QtLogo />
        <TitleText>Qt <Zh>设计师</Zh></TitleText>
        <CaptionButton aria-label="Minimize"><Minimize /></CaptionButton>
        <CaptionButton aria-label="Maximize"><Maximize /></CaptionButton>
        <CaptionButton $close aria-label="Close"><Close /></CaptionButton>
      </TitleBar>

      <MenuBar>
        {menus.map(([name, key]) =>
          name ? (
            <MenuItem key={name}><Zh>{name}</Zh>(<u>{key}</u>)</MenuItem>
          ) : (
            <MenuItem key="edit"><u>E</u>dit</MenuItem>
          )
        )}
      </MenuBar>

      <ToolBar>
        {toolGroups.map((group, i) => (
          <ToolGroup key={i}>
            <Grip />
            {group.map(([label, icon]) => (
              <ToolButton key={label} aria-label={label} $on={label === "Edit widgets"}>{icon}</ToolButton>
            ))}
          </ToolGroup>
        ))}
      </ToolBar>

      <Main>
        <LeftDock>
          <DockTitle>Widget Box</DockTitle>
          <FilterRow><FilterInput placeholder="Filter" aria-label="Filter widgets" /></FilterRow>
          <Pane>
            <PaneBody>
              {categories.map((c) => (
                <React.Fragment key={c.name}>
                  <Category><Toggle /><b>{c.name}</b></Category>
                  <WidgetList>
                    {c.items.map(([label, icon]) => (
                      <WidgetItem key={label}>{icon}<span>{label}</span></WidgetItem>
                    ))}
                  </WidgetList>
                </React.Fragment>
              ))}
            </PaneBody>
            <ScrollBar parts={[0, 166, 317]} />
          </Pane>
        </LeftDock>

        <MdiArea>
          <FormWindow>
            <TitleBar $inner>
              <QtLogo />
              <TitleText $bold>Form - untitled*</TitleText>
              <CaptionButton aria-label="Minimize form"><Minimize /></CaptionButton>
              <CaptionButton $close aria-label="Close form"><Close /></CaptionButton>
            </TitleBar>
            <Canvas>
              <ButtonBox $y={101}>
                <PushButton $w={73} $default>OK</PushButton>
                <PushButton $w={73}>Cancel</PushButton>
              </ButtonBox>
              <ButtonBox $y={161}>
                <PushButton $w={58}>Save</PushButton>
                <PushButton $w={57}>Discard</PushButton>
                <PushButton $w={58}>Cancel</PushButton>
                {["-4px", "calc(50% - 3px)", "calc(100% - 2px)"].map((x, i) =>
                  ["-4px", "calc(50% - 3px)", "calc(100% - 2px)"].map((y, j) =>
                    i === 1 && j === 1 ? null : <Handle key={`${i}${j}`} $x={x} $y={y} />
                  )
                )}
              </ButtonBox>
            </Canvas>
          </FormWindow>
        </MdiArea>

        <RightDock>
          <DockTitle><Zh>对象查看器</Zh></DockTitle>
          <Pane $h={74} $gap={2}>
            <PaneBody>
              <table>
                <thead>
                  <tr><HeadCell $w={77}><Zh>对象</Zh></HeadCell><HeadCell><Zh>类</Zh></HeadCell></tr>
                </thead>
                <tbody>
                  <TreeRow>
                    <td><Cell><ToggleGuide><Toggle /></ToggleGuide><BreakLayout color size={20} /><Cell $pad={4}>Form</Cell></Cell></td>
                    <td><Cell $gap={5} $pad={4}><WidgetIcon /><PropValue>QWidget</PropValue></Cell></td>
                  </TreeRow>
                  <TreeRow $bg="#e8e8e8">
                    <td><Cell><Indent /><Guide $branch /><Cell $pad={2}>b<Zh>…</Zh>x</Cell></Cell></td>
                    <td><Cell $gap={5} $pad={4}><BoxIcon size={16} /><PropValue>QDialogButtonBox</PropValue></Cell></td>
                  </TreeRow>
                  <TreeRow $bg={face}>
                    <td><Cell><Blank><Indent /><Guide $branch $end /></Blank><Cell $pad={2}>b<Zh>…</Zh>2</Cell></Cell></td>
                    <td><Cell $gap={5} $pad={4}><BoxIcon size={16} picked /><PropValue>QDialogButtonBox</PropValue></Cell></td>
                  </TreeRow>
                </tbody>
              </table>
            </PaneBody>
            <ScrollBar off />
          </Pane>

          <DockTitle><Zh>属性编辑器</Zh></DockTitle>
          <FilterRow $tall>
            <FilterInput placeholder="Filter" aria-label="Filter properties" />
            <IconButton aria-label="Add property"><PlusIcon menu /></IconButton>
            <IconButton aria-label="Remove property"><MinusIcon /></IconButton>
            <IconButton aria-label="Configure"><WrenchIcon /></IconButton>
          </FilterRow>
          <ObjectLabel>buttonBox_2 : QDialogButtonBox</ObjectLabel>
          <PropArea>
            <Pane>
              <PaneBody>
                <table>
                  <thead>
                    <tr><HeadCell $w={150}><Zh>属性</Zh></HeadCell><HeadCell><Zh>值</Zh></HeadCell></tr>
                  </thead>
                  <tbody>
                    <PropRow $bg={green}>
                      <td><Cell><Guide $branch /><PropName as="span">orientation</PropName></Cell></td>
                      <td><Cell $pad={2}><PropValue>Horizontal</PropValue></Cell></td>
                    </PropRow>
                    <PropRow $bg={face}>
                      <td><Cell><ToggleGuide $bg={pale}><Toggle /></ToggleGuide><PropName as="span" $bold>standardButtons</PropName></Cell></td>
                      <td><Cell $pad={2}><PropValue>Save|Cancel|Discard</PropValue></Cell></td>
                    </PropRow>
                    {flags.map((f, i) => (
                      <PropRow key={f} $tall $bg={i % 2 ? pale : green}>
                        <td><Cell><Guide /><Guide $branch /><PropName htmlFor={`flag-${f}`}>{f}</PropName></Cell></td>
                        <td><Cell $pad={3}><Check type="checkbox" id={`flag-${f}`} defaultChecked={f === "Save"} /></Cell></td>
                      </PropRow>
                    ))}
                    <PropRow $bg={pale} $tall>
                      <td><Cell><Guide /><Guide /></Cell></td>
                      <td />
                    </PropRow>
                  </tbody>
                </table>
              </PaneBody>
              <ScrollBar parts={[124, 47, 37]} />
            </Pane>
            <Highlight />
            <Note>在这勾选需要的标准按钮</Note>
          </PropArea>

          <DockTitle><Zh>信号/槽编辑器</Zh></DockTitle>
          <SlotTools>
            <IconButton aria-label="Add connection"><PlusIcon /></IconButton>
            <IconButton aria-label="Remove connection"><MinusIcon /></IconButton>
          </SlotTools>
          <Pane $h={74}>
            <PaneBody>
              <table>
                <thead>
                  <tr>
                    <HeadCell $w={100}>
                      <HeadFlex><Zh>发送者</Zh><svg width="10" height="10"><path d="M0 3h10L5 8z" fill={shade} /></svg></HeadFlex>
                    </HeadCell>
                    <HeadCell $w={100}><Zh>信号</Zh></HeadCell>
                    <HeadCell $w={100}><Zh>接收者</Zh></HeadCell>
                    <HeadCell><Zh>槽</Zh></HeadCell>
                  </tr>
                </thead>
              </table>
            </PaneBody>
          </Pane>
          <Tabs>
            <Tab $on><Zh>信号/槽编辑器</Zh></Tab>
            <Tab><Zh>动作编辑器</Zh></Tab>
            <Tab><Zh>资源浏览器</Zh></Tab>
          </Tabs>
        </RightDock>
      </Main>

      <StatusBar><SizeGrip /></StatusBar>
    </Window>
  );
}
